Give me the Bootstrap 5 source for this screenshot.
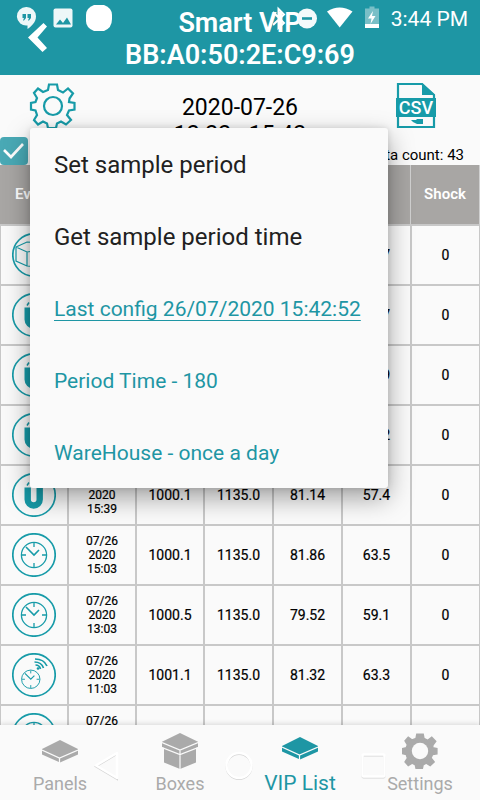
<!DOCTYPE html>
<html lang="en">
<head>
<meta charset="utf-8">
<meta name="viewport" content="width=device-width, initial-scale=1">
<title>Smart VIP</title>
<link href="https://cdn.jsdelivr.net/npm/bootstrap@5.3.0/dist/css/bootstrap.min.css" rel="stylesheet">
<style>
:root{--teal:#1e96a4;--paper:#fafafa;--rule:#c8c8c8}
body{font-family:Roboto,"Noto Sans",sans-serif;background:var(--paper);color:#000}
.app-bar{background:var(--teal);height:75px}
.app-bar h1{font-size:27px;line-height:32px;font-weight:600;padding-top:7px}
.status{top:0;height:38px;left:0;right:0}
.clock{font-size:21px;line-height:38px}
.back{left:20px;top:16px}
.tools{height:90px}
.tools-row{padding:0 25px}
.range{font-size:23px;line-height:27px;padding-top:19px}
.icon-btn{background:none;border:0;padding:0;line-height:0}
.tick{appearance:none;width:28px;height:28px;margin:0;border-radius:4px;background:var(--teal) url("data:image/svg+xml,%3Csvg xmlns='http://www.w3.org/2000/svg' viewBox='0 0 28 28'%3E%3Cpath d='M4 13l7 7L23 7' fill='none' stroke='white' stroke-width='2.6'/%3E%3C/svg%3E");opacity:.8}
.count{font-size:15px;line-height:20px}
.log{table-layout:fixed;border-collapse:separate;border-spacing:0;font-size:14px;text-align:center;-webkit-text-stroke:.2px}
.log th{height:60px;padding:0;background:#a8a6a4;color:#fff;font-size:15px;font-weight:600;border-right:1px solid #d0d0d0;border-bottom:1px solid var(--rule);-webkit-text-stroke:0}
.log th:nth-child(-n+3){width:68px}
.log td{height:60px;padding:0;border:1px solid var(--rule);line-height:20px}
.log td:nth-child(2){font-size:12px;line-height:14px}
.log svg{display:block;margin:auto;width:44px;height:44px}
.popup{left:30px;top:128px;width:calc(100% - 122px);background:var(--paper);border-radius:3px;box-shadow:0 10px 26px rgba(0,0,0,.36),0 0 6px rgba(0,0,0,.12);z-index:5}
.popup button,.popup a,.popup p{display:block;width:100%;height:72px;margin:0;padding:1px 24px 0;border:0;background:none;text-align:left;font-size:24px;line-height:72px;color:#212121;white-space:nowrap}
.popup a,.popup p{font-size:21px;color:var(--teal)}
.popup a{text-underline-offset:4px;text-decoration-thickness:1px}
.tabs{height:75px;background:var(--paper);box-shadow:0 -1px 5px rgba(0,0,0,.14);z-index:2}
.tabs a{color:#aaa;text-decoration:none;font-size:18px;line-height:24px;padding-top:8px}
.tabs svg{display:block;width:36px;height:36px}
.tabs a span{padding-top:3px}
.tabs a.on{color:var(--teal);font-size:21px}
.tabs a.on span{padding-top:2px}
.soft-keys{inset:0;pointer-events:none}
</style>
<script src="https://cdn.jsdelivr.net/npm/bootstrap@5.3.0/dist/js/bootstrap.bundle.min.js"></script>
</head>
<body>
<svg width="0" height="0" class="position-absolute" aria-hidden="true">
<defs>
<g id="ring" fill="none" stroke="#179ba8"><circle cx="22" cy="22" r="21.2" stroke-width="1.7"/></g>
<g id="face" fill="none" stroke="#179ba8" stroke-width="1.3"><circle cx="22" cy="22" r="12.6"/><path d="M22 10v4M22 30v4M10 22h4M30 22h4"/><path d="M14 14l8 8 5-5" stroke-width="1.6"/></g>
<symbol id="i-clock" viewBox="0 0 44 44"><use href="#ring"/><use href="#face"/></symbol>
<symbol id="i-sync" viewBox="0 0 44 44"><use href="#ring"/><use href="#face" transform="translate(2.7 10.2) scale(.73)"/><g fill="none" stroke="#179ba8" stroke-width="1.7"><path d="M23 6q9 0 12 7M22.500 9q7 0 9 6M23.500 12q4 0 5 4"/></g><circle cx="26" cy="15.500" r="1.300" fill="#179ba8"/></symbol>
<symbol id="i-magnet" viewBox="0 0 44 44"><use href="#ring"/><path d="M15.700 14.500v12a6 6 0 0 0 12 0v-12" fill="none" stroke="#179ba8" stroke-width="6.400"/><path d="M15 12.500l2-3M29 12.500l-2-3" stroke="#179ba8" stroke-width="1.500"/></symbol>
<symbol id="i-box" viewBox="0 0 44 44"><use href="#ring"/><path d="M4 14l11-5 22 1 2 6v12l-12 6-12-1-11-5zM4 14l11 5 22-3M15 19v14M29 17v16" fill="none" stroke="#179ba8" stroke-width="1.200"/></symbol>
<symbol id="i-slab" viewBox="0 0 36 24"><path d="M18 1L36 10v5.500L18 23.500 0 15.500V10z" fill="currentColor"/><path d="M0 11l17.500 8L36 11M17.500 19v5" fill="none" stroke="#fafafa" stroke-width="1.200"/></symbol>
</defs>
</svg>
<div class="vh-100 d-flex flex-column overflow-hidden position-relative">
<header class="app-bar position-relative text-white text-center flex-shrink-0">
<h1 class="m-0">Smart VIP<br>BB:A0:50:2E:C9:69</h1>
<button class="icon-btn back position-absolute" aria-label="Back"><svg width="36" height="44"><path d="M23.500 7L27 10.500 17.500 21.500 27 32 22.500 36 8 21.500z" fill="#fff"/></svg></button>
<div class="status position-absolute d-flex justify-content-between">
<svg width="120" height="38" aria-hidden="true"><path d="M26.500 7a9.300 9.300 0 0 1 9.500 9.300c0 6-4.500 10-8.500 12.700v-3.500a9.300 9.300 0 1 1-1-18.500z" fill="#eef7f8"/><path d="M22.500 14h3.500v4l-2 2.500h-1l1-2.500h-1.500zM27.500 14H31v4l-2 2.500h-1l1-2.500h-1.500z" fill="#1e96a4"/><rect x="53.500" y="8.500" width="19" height="19" rx="2" fill="#eef7f8"/><path d="M56 24.500l4-5 3 3.500 4-5.500 4 7z" fill="#1e96a4"/><path d="M94 5h10q8 3 8 10v4q0 9-8 12H94q-8-3-8-10v-6q0-7 8-10z" fill="#fff"/></svg>
<div class="d-flex pe-2"><svg width="114" height="38" aria-hidden="true"><path d="M0 12l11 11-5.500 5V9l5.500 5.500L0 25" fill="none" stroke="#fff" stroke-width="2"/><circle cx="34" cy="18.500" r="10" fill="#f4fafb"/><path d="M29 18.500h10" stroke="#1e96a4" stroke-width="2.600"/><path d="M54 11.500q12.500-8 25.500 0L66.700 27.500z" fill="#fff"/><path d="M92 8.500h4.500v-2h5v2h4.500V28H92z" fill="#79bfc7"/><path d="M92 24h14v4H92z" fill="#fff"/><path d="M100 11l-5 7.500h3.500l-1 5.500 5-8h-3.500z" fill="#fff"/></svg><span class="clock ps-1 pe-1">3:44 PM</span></div>
</div>
</header>
<section class="tools d-flex flex-column position-relative flex-shrink-0">
<div class="tools-row d-flex justify-content-between">
<button class="icon-btn pt-2 ps-1 pe-2 align-self-start" aria-label="Configuration"><svg width="48" height="46" viewBox="-24 -23 48 46" fill="none" stroke="#179ba8" stroke-width="2.200"><circle r="9"/><path id="cog" d="M-4-21.500h8l1 5.500 5 2.500 5-4 5 5-3.500 5L16-4l5.500 1v6.500l-5.500 1-2 4.500 4 5-5 4.500-5-3-4 2-1 4.500h-8l-1-4.500-4-2-5 3-4-4.500 3-5-1.500-4.500-4.500-1V-3l4.500-1 1.500-4-3-5 4-4.500 5 3.500 5-2z"/></svg></button>
<div class="range text-center">2020-07-26<br>12:22 - 15:42</div>
<button class="icon-btn pt-2 pe-3 align-self-start" aria-label="Export CSV"><svg width="44" height="45" viewBox="0 0 44 45"><path d="M3 1h24l12 11v32H3z" fill="none" stroke="#179ba8" stroke-width="2.200"/><path d="M27 0l13 12H27zM1 15h40v19H1z" fill="#179ba8"/><text x="21" y="31" text-anchor="middle" font-family="Roboto" font-size="18" font-weight="500" fill="#fff">CSV</text><path d="M16 37h5l1-1h6v5h-6l-4-2z" fill="#179ba8"/></svg></button>
</div>
<div class="d-flex justify-content-between align-items-end mt-auto position-absolute bottom-0 w-100">
<input class="tick" type="checkbox" checked aria-label="Select all">
<span class="count pe-3">Data count: 43</span>
</div>
</section>
<main class="flex-grow-1 overflow-hidden">
<table class="log w-100">
<thead><tr><th>Event</th><th></th><th></th><th></th><th></th><th></th><th>Shock</th></tr></thead>
<tbody>
<tr><td><svg><use href="#i-box"/></svg></td><td></td><td></td><td></td><td></td><td>57.7</td><td>0</td></tr>
<tr><td><svg><use href="#i-magnet"/></svg></td><td></td><td></td><td></td><td></td><td>57.7</td><td>0</td></tr>
<tr><td><svg><use href="#i-magnet"/></svg></td><td></td><td></td><td></td><td></td><td>57.9</td><td>0</td></tr>
<tr><td><svg><use href="#i-magnet"/></svg></td><td></td><td></td><td></td><td></td><td>57.2</td><td>0</td></tr>
<tr><td><svg><use href="#i-magnet"/></svg></td><td>07/26<br>2020<br>15:39</td><td>1000.1</td><td>1135.0</td><td>81.14</td><td>57.4</td><td>0</td></tr>
<tr><td><svg><use href="#i-clock"/></svg></td><td>07/26<br>2020<br>15:03</td><td>1000.1</td><td>1135.0</td><td>81.86</td><td>63.5</td><td>0</td></tr>
<tr><td><svg><use href="#i-clock"/></svg></td><td>07/26<br>2020<br>13:03</td><td>1000.5</td><td>1135.0</td><td>79.52</td><td>59.1</td><td>0</td></tr>
<tr><td><svg><use href="#i-sync"/></svg></td><td>07/26<br>2020<br>11:03</td><td>1001.1</td><td>1135.0</td><td>81.32</td><td>63.3</td><td>0</td></tr>
<tr><td><svg><use href="#i-clock"/></svg></td><td>07/26<br>2020<br>09:03</td><td></td><td></td><td></td><td></td><td></td></tr>
</tbody>
</table>
</main>
<nav class="tabs position-relative flex-shrink-0">
<div class="row g-0 text-center">
<a href="#" class="col d-flex flex-column align-items-center"><svg><use href="#i-slab" width="36" height="24" y="6"/></svg><span>Panels</span></a>
<a href="#" class="col d-flex flex-column align-items-center"><svg viewBox="0 0 36 36"><path d="M18 0l18 8.700V14l-2 1v14.500L18 36 2 29.500V15l-2-1V8.700z" fill="currentColor"/><path d="M0 9.500l18 7.500 18-7.500M0 14.500l18 7 18-7M18 17v19" fill="none" stroke="#fafafa" stroke-width="1.200"/></svg><span>Boxes</span></a>
<a href="#" class="col d-flex flex-column align-items-center on" aria-current="page"><svg viewBox="0 3 36 36"><use href="#i-slab" width="36" height="24" y="6"/></svg><span>VIP List</span></a>
<a href="#" class="col d-flex flex-column align-items-center"><svg viewBox="-23 -23 46 46"><g fill="currentColor" stroke="currentColor" stroke-width="2"><use href="#cog"/></g><circle r="10.500" fill="#fafafa"/></svg><span>Settings</span></a>
</div>
<svg class="soft-keys position-absolute w-100 h-100" viewBox="0 0 480 75" aria-hidden="true"><g fill="none" stroke="#d4d4d4" stroke-width="2" transform="translate(0 1)"><path d="M117 28v25L96 40.500z"/><circle cx="239" cy="40.500" r="12.500"/><rect x="362.500" y="29.500" width="22" height="22" rx="1"/></g><g fill="none" stroke="#fff" stroke-width="2.500" stroke-linejoin="round"><path d="M117 28v25L96 40.500z"/><circle cx="239" cy="40.500" r="12.500"/><rect x="362.500" y="29.500" width="22" height="22" rx="1"/></g></svg>
</nav>
<div class="popup position-absolute">
<button type="button">Set sample period</button>
<button type="button">Get sample period time</button>
<a href="#">Last config 26/07/2020 15:42:52</a>
<p>Period Time - 180</p>
<p>WareHouse - once a day</p>
</div>
</div>
</body>
</html>
